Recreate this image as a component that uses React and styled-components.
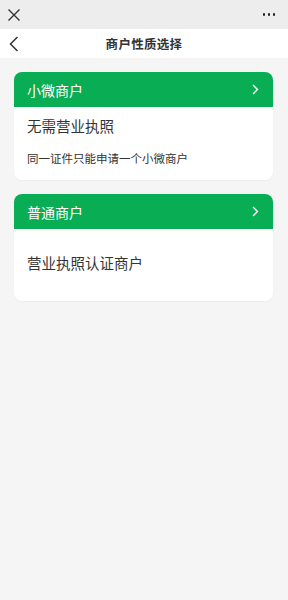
import React from "react";
import styled, { createGlobalStyle } from "styled-components";

const GlobalStyle = createGlobalStyle`
  html, body {
    margin: 0;
    padding: 0;
    background: #f5f5f5;
    font-family: "Noto Sans CJK SC", "Noto Sans", sans-serif;
  }
`;

const merchants = [
  {
    title: "小微商户",
    lead: "无需营业执照",
    note: "同一证件只能申请一个小微商户",
  },
  {
    title: "普通商户",
    lead: "营业执照认证商户",
  },
];

const App = () => {
  return (
    <>
      <GlobalStyle />
      <Page>
        <TopBar>
          <svg width="14" height="14" viewBox="0 0 14 14">
            <path d="M1.5 1.5 L12.5 12.5 M12.5 1.5 L1.5 12.5" stroke="#333" strokeWidth="1.4" fill="none" />
          </svg>
          <Dots>
            <span />
            <span />
            <span />
          </Dots>
        </TopBar>
        <NavBar>
          <BackBtn>
            <svg width="10" height="16" viewBox="0 0 10 16">
              <path d="M8.5 1 L1.5 8 L8.5 15" stroke="#333" strokeWidth="1.5" fill="none" />
            </svg>
          </BackBtn>
          <Title>商户性质选择</Title>
        </NavBar>
        <List>
          {merchants.map((m) => (
            <Card key={m.title}>
              <CardHead>
                <span>{m.title}</span>
                <svg width="7" height="11" viewBox="0 0 7 11">
                  <path d="M1 1 L5.5 5.5 L1 10" stroke="#fff" strokeWidth="1.4" fill="none" />
                </svg>
              </CardHead>
              <CardBody $centered={!m.note}>
                <Lead>{m.lead}</Lead>
                {m.note && <Note>{m.note}</Note>}
              </CardBody>
            </Card>
          ))}
        </List>
      </Page>
    </>
  );
};

const Page = styled.div`
  min-height: 600px;
  background: #f5f5f5;
`;

const TopBar = styled.div`
  height: 29px;
  background: #ededed;
  display: flex;
  align-items: center;
  justify-content: space-between;
  padding: 0 13px 0 7px;
  box-sizing: border-box;
`;

const Dots = styled.div`
  display: flex;
  gap: 2.5px;

  span {
    width: 2.5px;
    height: 2.5px;
    border-radius: 50%;
    background: #222;
  }
`;

const NavBar = styled.div`
  height: 29px;
  background: #fff;
  display: flex;
  align-items: center;
  justify-content: center;
  position: relative;
`;

const BackBtn = styled.div`
  position: absolute;
  left: 9px;
  top: 7px;
  display: flex;
`;

const Title = styled.div`
  font-size: 12.5px;
  font-weight: 700;
  color: #333;
  letter-spacing: 0.3px;
`;

const List = styled.div`
  display: flex;
  flex-direction: column;
  gap: 14px;
  padding: 14px 15px 0 14px;
`;

const Card = styled.div`
  background: #fff;
  border-radius: 8px;
  overflow: hidden;
  box-shadow: 0 1px 2px rgba(0, 0, 0, 0.04);
`;

const CardHead = styled.div`
  height: 35px;
  background: #09ad53;
  color: #fff;
  display: flex;
  align-items: center;
  justify-content: space-between;
  padding: 0 13px;
  font-size: 14px;

  svg {
    margin-right: 1px;
  }
`;

const CardBody = styled.div`
  height: ${(p) => (p.$centered ? "72px" : "73px")};
  padding: ${(p) => (p.$centered ? "0 13px 4px" : "9px 13px 0")};
  display: flex;
  flex-direction: column;
  justify-content: ${(p) => (p.$centered ? "center" : "flex-start")};
  box-sizing: border-box;
`;

const Lead = styled.div`
  font-size: 14.5px;
  color: #333;
  line-height: 20px;
`;

const Note = styled.div`
  font-size: 11.5px;
  color: #333;
  margin-top: 14px;
  line-height: 16px;
`;

export default App;
